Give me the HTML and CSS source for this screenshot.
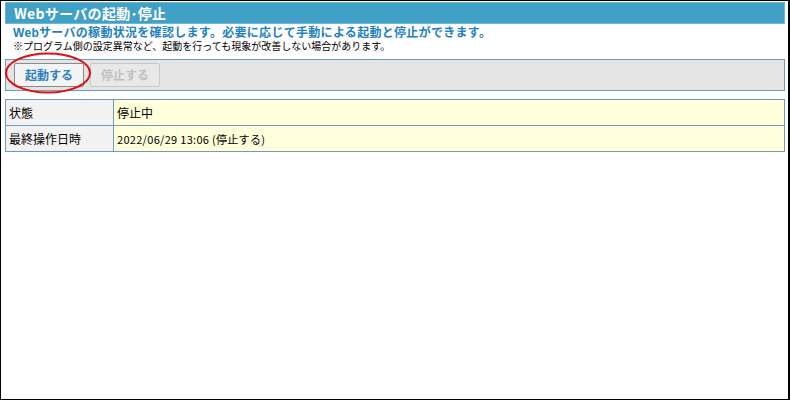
FILE: index.html
```html
<!doctype html>
<html lang="ja">
<head>
<meta charset="UTF-8">
<title>Webサーバの起動･停止</title>
<link rel="stylesheet" href="styles.css">
</head>
<body>
<div class="frame">
	<h1 class="title">Webサーバの起動･停止</h1>
	<p class="lead">Webサーバの稼動状況を確認します。必要に応じて手動による起動と停止ができます。</p>
	<p class="note">※プログラム側の設定異常など、起動を行っても現象が改善しない場合があります。</p>
	<div class="toolbar">
		<button class="btn">起動する</button>
		<button class="btn" disabled>停止する</button>
	</div>
	<table class="info">
		<tr>
			<td class="label">状態</td>
			<td class="value">停止中</td>
		</tr>
		<tr>
			<td class="label">最終操作日時</td>
			<td class="value small">2022/06/29 13:06 (停止する)</td>
		</tr>
	</table>
	<!-- red marker round the start button -->
	<svg class="mark" width="100" height="50" viewBox="0 0 100 50">
		<ellipse cx="44" cy="21" rx="42" ry="19.5" fill="none" stroke="#e01010" stroke-width="2"/>
	</svg>
</div>
</body>
</html>
```

FILE: styles.css
```css
body{margin:0;font-family:"Noto Sans CJK JP","DejaVu Sans",sans-serif;color:#000;}
.frame{position:relative;box-sizing:border-box;width:790px;height:400px;border:1px solid #000;border-right-width:2px;padding:1px 3px 0 4px;background:#fff;}
.title{margin:0;height:22px;box-sizing:border-box;background:#41a0c6;border:1px solid #6db6d6;color:#fff;font-size:14px;font-weight:bold;line-height:20px;padding-left:8px;letter-spacing:.3px;}
.lead,.note{font-family:"Liberation Sans","Noto Sans CJK JP",sans-serif;}
.lead{margin:3px 0 0 8px;color:#1d82c2;font-size:12px;font-weight:bold;line-height:13px;letter-spacing:.3px;}
.note{margin:1px 0 0 8px;font-size:10px;line-height:12px;}
.toolbar{display:flex;gap:6px;margin-top:6px;height:32px;box-sizing:border-box;border:1px solid #6d9dbb;background:#e4e4e4;padding:3px 8px;}
.btn{width:70px;height:24px;padding:0;border:1px solid #8a8a8a;border-radius:2px;background:#f4f4f4;color:#2a80c0;font-family:inherit;font-size:12px;font-weight:bold;line-height:20px;}
.btn:disabled{border-color:#c8c8c8;background:#e8e8e8;color:#c0c0c0;}
.info{margin-top:8px;width:100%;border-collapse:collapse;}
.info td{border:1px solid #6d9dbb;height:26px;box-sizing:border-box;padding:0 3px;font-size:12px;line-height:16px;}
.info td.label{width:108px;background:#f2f2f2;}
.info td.value{background:#ffffdc;}
.info td.small{font-size:11px;letter-spacing:.3px;}
.mark{position:absolute;left:3px;top:51px;}
```
